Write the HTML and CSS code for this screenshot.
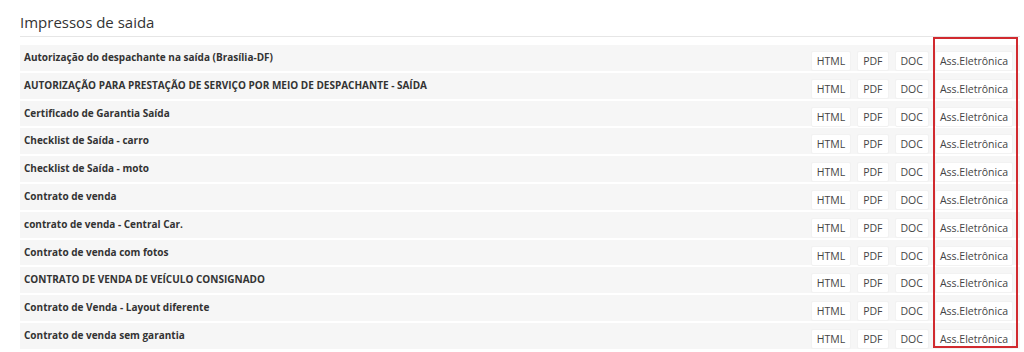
FILE: index.html
```html
<!DOCTYPE html>
<html>
<head>
  <meta charset="utf-8">
  <link rel="stylesheet" href="styles.css">
</head>
<body>
  <div id="panel">
    <h3 class="panel-title">Impressos de saida</h3>

    <div id="printList">
      <div class="print-row">
        <span class="print-name">Autorização do despachante na saída (Brasília-DF)</span>
        <div class="print-actions">
          <a class="btn">HTML</a><a class="btn">PDF</a><a class="btn">DOC</a><a class="btn btn-sign">Ass.Eletrônica</a>
        </div>
      </div>
      <div class="print-row">
        <span class="print-name">AUTORIZAÇÃO PARA PRESTAÇÃO DE SERVIÇO POR MEIO DE DESPACHANTE - SAÍDA</span>
        <div class="print-actions">
          <a class="btn">HTML</a><a class="btn">PDF</a><a class="btn">DOC</a><a class="btn btn-sign">Ass.Eletrônica</a>
        </div>
      </div>
      <div class="print-row">
        <span class="print-name">Certificado de Garantia Saída</span>
        <div class="print-actions">
          <a class="btn">HTML</a><a class="btn">PDF</a><a class="btn">DOC</a><a class="btn btn-sign">Ass.Eletrônica</a>
        </div>
      </div>
      <div class="print-row">
        <span class="print-name">Checklist de Saída - carro</span>
        <div class="print-actions">
          <a class="btn">HTML</a><a class="btn">PDF</a><a class="btn">DOC</a><a class="btn btn-sign">Ass.Eletrônica</a>
        </div>
      </div>
      <div class="print-row">
        <span class="print-name">Checklist de Saída - moto</span>
        <div class="print-actions">
          <a class="btn">HTML</a><a class="btn">PDF</a><a class="btn">DOC</a><a class="btn btn-sign">Ass.Eletrônica</a>
        </div>
      </div>
      <div class="print-row">
        <span class="print-name">Contrato de venda</span>
        <div class="print-actions">
          <a class="btn">HTML</a><a class="btn">PDF</a><a class="btn">DOC</a><a class="btn btn-sign">Ass.Eletrônica</a>
        </div>
      </div>
      <div class="print-row">
        <span class="print-name">contrato de venda - Central Car.</span>
        <div class="print-actions">
          <a class="btn">HTML</a><a class="btn">PDF</a><a class="btn">DOC</a><a class="btn btn-sign">Ass.Eletrônica</a>
        </div>
      </div>
      <div class="print-row">
        <span class="print-name">Contrato de venda com fotos</span>
        <div class="print-actions">
          <a class="btn">HTML</a><a class="btn">PDF</a><a class="btn">DOC</a><a class="btn btn-sign">Ass.Eletrônica</a>
        </div>
      </div>
      <div class="print-row">
        <span class="print-name">CONTRATO DE VENDA DE VEÍCULO CONSIGNADO</span>
        <div class="print-actions">
          <a class="btn">HTML</a><a class="btn">PDF</a><a class="btn">DOC</a><a class="btn btn-sign">Ass.Eletrônica</a>
        </div>
      </div>
      <div class="print-row">
        <span class="print-name">Contrato de Venda - Layout diferente</span>
        <div class="print-actions">
          <a class="btn">HTML</a><a class="btn">PDF</a><a class="btn">DOC</a><a class="btn btn-sign">Ass.Eletrônica</a>
        </div>
      </div>
      <div class="print-row">
        <span class="print-name">Contrato de venda sem garantia</span>
        <div class="print-actions">
          <a class="btn">HTML</a><a class="btn">PDF</a><a class="btn">DOC</a><a class="btn btn-sign">Ass.Eletrônica</a>
        </div>
      </div>

      <!-- highlight around the signature column -->
      <div class="sign-highlight"></div>
    </div>
  </div>
</body>
</html>
```

FILE: styles.css
```css
body {
  margin: 0;
  background-color: #ffffff;
  font-family: 'Open Sans', 'DejaVu Sans', sans-serif;
  color: #333333;
}

#panel {
  padding: 0 4px 0 20px;
}

.panel-title {
  margin: 0;
  padding-top: 12px;
  height: 24px;
  font-size: 15px;
  font-weight: 400;
  line-height: 20px;
  color: #333333;
  border-bottom: 1px solid #e6e6e6;
}

#printList {
  position: relative;
  margin-top: 8px;
}

.print-row {
  display: flex;
  justify-content: space-between;
  align-items: flex-start;
  height: 25.8px;
  background-color: #f6f6f6;
  border-bottom: 2px solid #ffffff;
}

.print-name {
  padding: 5px 0 0 4px;
  font-size: 10px;
  font-weight: 700;
  line-height: 15px;
  color: #333333;
}

.print-actions {
  display: flex;
  gap: 6px;
  padding: 6px 7px 0 0;
}

.btn {
  display: block;
  height: 18px;
  padding: 0 5px;
  background-color: #ffffff;
  border: 1px solid #f2f2f2;
  border-radius: 2px;
  font-size: 10.5px;
  line-height: 18px;
  color: #444444;
  cursor: pointer;
}

.btn-sign {
  padding: 0 4px;
}

.sign-highlight {
  position: absolute;
  top: -8px;
  right: 2px;
  width: 81px;
  height: 307px;
  border: 2px solid #d12a2f;
  pointer-events: none;
}
```
